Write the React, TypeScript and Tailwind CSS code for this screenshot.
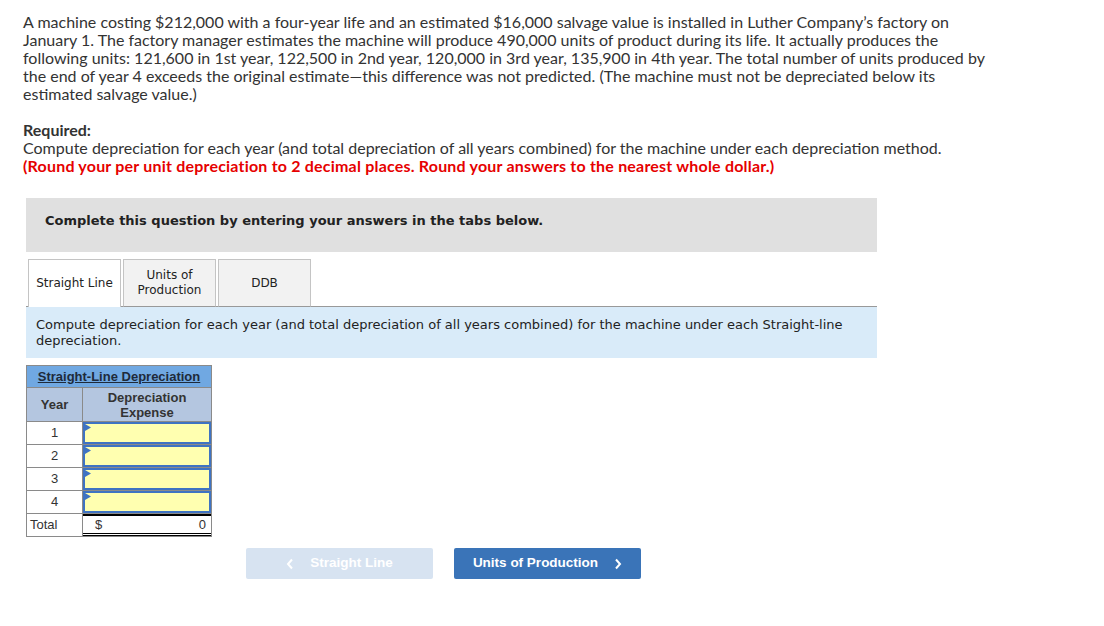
import React from "react";

const para = "font-['Lato','Open_Sans',sans-serif] text-[16px] leading-[18px] text-[#333333]";
const verd = "font-['DejaVu_Sans','Verdana',sans-serif]";
const arial = "font-['Liberation_Sans','Arial',sans-serif]";

function InputCell() {
  return (
    <div className="relative h-full w-full border-2 border-[#3f73c2] bg-[#ffffb0]">
      <svg className="absolute left-0 top-0" width="6" height="7" viewBox="0 0 6 7">
        <polygon points="0,0 6,3.5 0,7" fill="#3f73c2" />
      </svg>
    </div>
  );
}

export default function App() {
  const rows = [1, 2, 3, 4];
  return (
    <div className="w-[1104px] h-[626px] bg-white overflow-hidden">
      <div className="pl-[23px] pt-[13px]">
        <p className={para}>
          A machine costing $212,000 with a four-year life and an estimated $16,000 salvage value is installed in Luther Company’s factory on
          <br />
          January 1. The factory manager estimates the machine will produce 490,000 units of product during its life. It actually produces the
          <br />
          following units: 121,600 in 1st year, 122,500 in 2nd year, 120,000 in 3rd year, 135,900 in 4th year. The total number of units produced by
          <br />
          the end of year 4 exceeds the original estimate—this difference was not predicted. (The machine must not be depreciated below its
          <br />
          estimated salvage value.)
        </p>
        <p className={`${para} mt-[18px] font-bold`}>Required:</p>
        <p className={para}>
          Compute depreciation for each year (and total depreciation of all years combined) for the machine under each depreciation method.
        </p>
        <p className={`${para} font-bold text-[#e60000] tracking-[0.2px]`}>
          (Round your per unit depreciation to 2 decimal places. Round your answers to the nearest whole dollar.)
        </p>
      </div>

      <div className="ml-[26px] w-[851px] mt-[23px]">
        <div className={`h-[54px] bg-[#e0e0e0] flex items-center pl-[19px] pb-[9px] ${verd} text-[13px] font-bold text-[#222]`}>
          Complete this question by entering your answers in the tabs below.
        </div>

        <div className={`mt-[7px] flex items-end h-[48px] ${verd} text-[12px] text-[#222] leading-[15px]`}>
          <div className="w-[2px] h-full border-b border-[#999]" />
          <div className="h-full w-[93px] border border-b-0 border-[#c4c4c4] bg-white flex items-center justify-center text-center">
            Straight Line
          </div>
          <div className="w-[2px] h-full border-b border-[#999]" />
          <div className="h-full w-[93px] border border-[#c4c4c4] border-b-[#999] bg-[#f2f2f2] flex items-center justify-center text-center">
            Units of
            <br />
            Production
          </div>
          <div className="w-[2px] h-full border-b border-[#999]" />
          <div className="h-full w-[93px] border border-[#c4c4c4] border-b-[#999] bg-[#f2f2f2] flex items-center justify-center text-center">
            DDB
          </div>
          <div className="flex-1 h-full border-b border-[#999]" />
        </div>

        <div className={`h-[51px] bg-[#d9ebf9] pl-[10px] pt-[10px] ${verd} text-[13px] leading-[16px] text-[#222]`}>
          Compute depreciation for each year (and total depreciation of all years combined) for the machine under each Straight-line
          <br />
          depreciation.
        </div>

        <div className={`mt-[7px] w-[186px] ${arial} text-[13px]`}>
          <div className="h-[23px] bg-[#70a8e2] border border-[#8a8a8a] flex items-center justify-center font-bold underline text-[#1e2a3a]">
            Straight-Line Depreciation
          </div>
          <div className="flex h-[34px] border-x border-b border-[#8a8a8a] bg-[#b4c6e0] text-[#333] font-bold leading-[15px]">
            <div className="w-[56px] border-r border-[#8a8a8a] flex items-center justify-center">Year</div>
            <div className="flex-1 flex items-center justify-center text-center">
              Depreciation
              <br />
              Expense
            </div>
          </div>
          {rows.map((r) => (
            <div key={r} className="flex h-[23px] border-x border-b border-[#8a8a8a] text-[#333]">
              <div className="w-[56px] border-r border-[#8a8a8a] flex items-center justify-center bg-white">{r}</div>
              <div className="flex-1 h-full">
                <InputCell />
              </div>
            </div>
          ))}
          <div className="flex h-[23px] border-x border-b border-[#8a8a8a] text-[#333]">
            <div className="w-[56px] border-r border-[#8a8a8a] flex items-center pl-[3px] bg-white">Total</div>
            <div className="flex-1 h-full border-t-2 border-t-black border-b-[3px] border-b-black border-double flex items-center justify-between pl-[12px] pr-[5px] bg-white">
              <span>$</span>
              <span>0</span>
            </div>
          </div>
        </div>

        <div className={`mt-[11px] ml-[220px] flex gap-[21px] ${arial} text-[13.5px] font-bold text-white`}>
          <div className="w-[187px] h-[31px] rounded-[2px] bg-[#d7e3f1] flex items-center justify-center gap-[16px]">
            <svg width="8" height="12" viewBox="0 0 8 12">
              <path d="M6 1.5 L2 6 L6 10.5" stroke="white" strokeWidth="2" fill="none" />
            </svg>
            <span>Straight Line</span>
          </div>
          <div className="w-[187px] h-[31px] rounded-[2px] bg-[#3a74b8] flex items-center justify-center gap-[16px]">
            <span>Units of Production</span>
            <svg width="8" height="12" viewBox="0 0 8 12">
              <path d="M2 1.5 L6 6 L2 10.5" stroke="white" strokeWidth="2" fill="none" />
            </svg>
          </div>
        </div>
      </div>
    </div>
  );
}
